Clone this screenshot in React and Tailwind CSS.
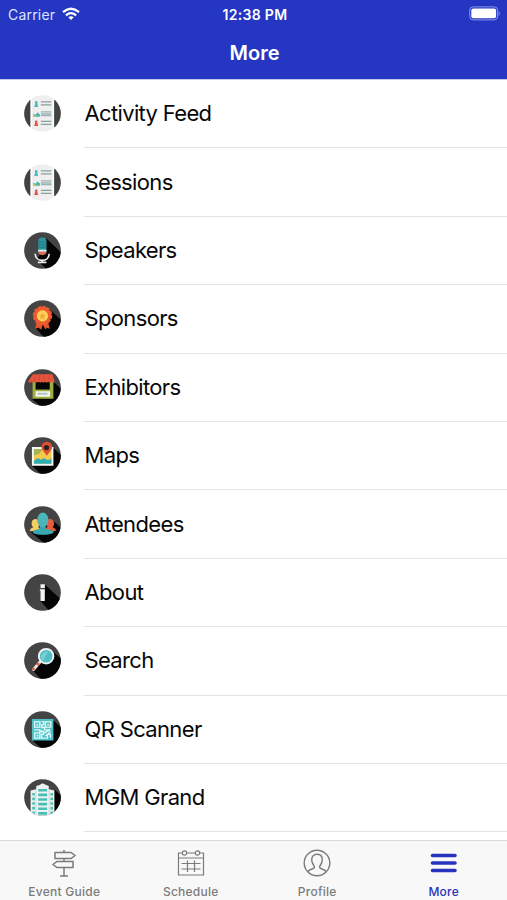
import React from "react";

function Disc({ id, shadow, children, light }) {
  return (
    <svg viewBox="0 0 112 112" className="-mt-px block size-[37px] shrink-0">
      <defs>
        <clipPath id={id}>
          <circle cx="56" cy="56" r="55.5" />
        </clipPath>
      </defs>
      <g clipPath={`url(#${id})`}>
        <rect width="112" height="112" fill={light ? "#efefef" : "#444444"} />
        {shadow && <path d={shadow} fill="#050505" />}
        {children}
      </g>
    </svg>
  );
}

function ListIcon({ id }) {
  return (
    <Disc id={id} light>
      <path d="M0 15H20V97H0ZM91 15H112V97H91Z" fill="#424242" />
      <path d="M20 11H24V101H20ZM87 11H91V101H87Z" fill="#fff" />
      <g fill="#4db9c2">
        <circle cx="37" cy="22" r="4" />
        <path d="M34 24h6l3 12H31z" />
      </g>
      <path d="M28 66V57l7 3 5-7 8 5v8z" fill="#48b6ac" />
      <path d="M28 66v-6l8 3v3z" fill="#e5c33e" />
      <g fill="#e2553f">
        <circle cx="37" cy="81" r="4" />
        <path d="M34 83h6l3 11H31z" />
      </g>
      <path d="M51 21h32M51 30h32M51 80h32M51 89h32" stroke="#86a19e" strokeWidth="4" />
      <path d="M51 51h32M51 57h32M51 62h32" stroke="#9db2b9" strokeWidth="4" />
    </Disc>
  );
}

function MicIcon() {
  return (
    <Disc id="mic" shadow="M68 20L112 62V112H68L38 83L50 66Z">
      <path d="M34 66c0 13 9 20 21 20s21-7 21-20M55 86v7M42 92h26" fill="none" stroke="#eee" strokeWidth="5" />
      <rect x="43" y="17" width="25" height="52" rx="12" fill="#2c929b" />
      <path d="M43 30h25M43 38h25M43 46h25" stroke="#247b84" strokeWidth="3" />
      <path d="M43 54h25v6H43z" fill="#e7eeee" />
      <path d="M43 60h25c-1 7-6 10-12.500 10S44 67 43 60z" fill="#e06b50" />
    </Disc>
  );
}

function RibbonIcon() {
  return (
    <Disc id="ribbon" shadow="M76 27L112 60V112H60L36 86Z">
      <path d="M39 62L34 86l10-2 8 6 5-16 8 15 4-5 9 3-6-25z" fill="#e4532c" />
      <circle cx="56" cy="47" r="27" fill="#ed5b2f" stroke="#ed5b2f" strokeWidth="5" strokeDasharray="10 4" />
      <circle cx="56" cy="48" r="17" fill="#ffd15b" />
      <path d="M56 38l3 7 8 1-6 5 2 8-7-4-7 4 2-8-6-5 8-1z" fill="#efac36" />
    </Disc>
  );
}

function ShopIcon() {
  return (
    <Disc id="shop" shadow="M88 38L112 60V112H50L25 92L56 55Z">
      <path d="M26 36h63v54H26z" fill="#9fae42" />
      <path d="M35 39h43v23H35z" fill="#070707" />
      <path d="M35 67h44v17H35z" fill="#f5f5ee" />
      <path d="M41 75h30" stroke="#abc3c8" strokeWidth="6" />
      <path d="M27 16h59l7 22q-4 7-9 0-5 7-10 0-5 7-10 0-5 7-10 0-5 7-10 0-5 7-10 0-5 7-10 0-5 7-12 0z" fill="#e5533b" />
      <path d="M35 20l-4 17M47 20l-2 17M61 20v17M74 20l4 17" stroke="#c94735" strokeWidth="2" />
    </Disc>
  );
}

function MapIcon() {
  return (
    <Disc id="map" shadow="M90 34L112 55V112H50L25 87Z">
      <path d="M24 30h65v57H24z" fill="#f7f7f4" />
      <path d="M30 36h53v45H30z" fill="#f7ca4b" />
      <path d="M30 36h27l-11 15-16 5z" fill="#a3b554" />
      <path d="M30 73q10-15 21-4 9-10 19 0 7 3 13-6v18H30z" fill="#32afb6" />
      <path d="M69 57L55 38a16 16 0 1 1 28 0z" fill="#e44c31" />
      <circle cx="68" cy="32" r="8" fill="#282321" />
    </Disc>
  );
}

function PeopleIcon() {
  return (
    <Disc id="people" shadow="M87 44L112 66V112H60L22 80Z">
      <ellipse cx="35" cy="53" rx="12" ry="14" fill="#f7ce61" />
      <path d="M17 75q3-10 18-13 13 0 16 14H20z" fill="#f7ce61" />
      <ellipse cx="79" cy="53" rx="12" ry="14" fill="#e85b3d" />
      <path d="M60 75q3-12 19-12 16 1 18 12l-14 3z" fill="#e85b3d" />
      <path d="M48 56h18v13l22 6-5 8q-26 6-52 0l-4-8 21-6z" fill="#36a7ac" />
      <ellipse cx="57" cy="42" rx="17" ry="22" fill="#4cb5b9" />
      <ellipse cx="58" cy="79" rx="32" ry="8" fill="#38a9ae" />
    </Disc>
  );
}

function InfoIcon() {
  return (
    <Disc id="info" shadow="M63 32L112 77V112H77L49 81L63 47Z">
      <path d="M50 31h13v11H50zM48 46h15v36H50V51h-2z" fill="#f3f3f3" />
    </Disc>
  );
}

function SearchIcon() {
  return (
    <Disc id="search" shadow="M83 25L112 50V112H50L28 87Z">
      <path d="M49 60L29 83" stroke="#e4e4e2" strokeWidth="9" strokeLinecap="round" />
      <path d="M45 64L40 70" stroke="#e4553c" strokeWidth="9" />
      <path d="M31 79l-4 5" stroke="#e4553c" strokeWidth="8" />
      <circle cx="67" cy="43" r="22" fill="#55bec5" stroke="#edf3f2" strokeWidth="6" />
      <path d="M52 48q0-17 21-20L57 58z" fill="#79d0d3" />
    </Disc>
  );
}

function QrIcon() {
  return (
    <Disc id="qr" shadow="M89 28L112 50V112H50L25 88Z">
      <path d="M24 24h65v65H24z" fill="#50c1c4" />
      <g fill="none" stroke="#e5faf8" strokeWidth="4">
        <path d="M32 33h16v16H32zM65 33h16v16H65zM32 66h16v16H32z" />
        <path d="M53 32h7v9h-6v9h8v7h18M31 57h17v5h11v9H53v11h10M65 82h6V71h9v11M60 67l17-9M65 76l15-13M53 58v7" />
      </g>
      <path d="M38 39h5v5h-5zM71 39h5v5h-5zM38 72h5v5h-5z" fill="#e5faf8" />
    </Disc>
  );
}

function HotelIcon() {
  return (
    <Disc id="hotel" shadow="M92 32L112 50V112H80Z">
      <path d="M20 112V35l17-4V21l10-3 9-5 11 5 8 3v10l17 4v77z" fill="#eef3f2" />
      <path d="M36 31v80M76 31v80" stroke="#ced8d7" strokeWidth="3" />
      <g stroke="#49beb6" strokeWidth="8">
        <path d="M43 34h27M43 48h27M43 62h27M43 76h27M43 90h27M43 104h27" />
        <path d="M25 46h8M25 60h8M25 74h8M25 88h8M25 102h8M80 46h8M80 60h8M80 74h8M80 88h8M80 102h8" />
      </g>
    </Disc>
  );
}

const rows = [
  ["Activity Feed", <ListIcon id="activity" />],
  ["Sessions", <ListIcon id="sessions" />],
  ["Speakers", <MicIcon />],
  ["Sponsors", <RibbonIcon />],
  ["Exhibitors", <ShopIcon />],
  ["Maps", <MapIcon />],
  ["Attendees", <PeopleIcon />],
  ["About", <InfoIcon />],
  ["Search", <SearchIcon />],
  ["QR Scanner", <QrIcon />],
  ["MGM Grand", <HotelIcon />],
];

function Tab({ label, active, children }) {
  return (
    <div className={`flex flex-1 flex-col items-center pt-[8px] ${active ? "text-[#2633bd]" : "text-[#7b7b7b]"}`}>
      <svg viewBox="0 0 28 28" className="block size-[28px]" fill="none" stroke="currentColor" strokeWidth="1.2">
        {children}
      </svg>
      <span className="mt-[7px] text-[12px] leading-[16px] font-medium tracking-[0.25px] whitespace-nowrap">{label}</span>
    </div>
  );
}

export default function App() {
  return (
    <div className="flex h-[900px] w-[507px] flex-col overflow-hidden bg-white font-['Inter','Liberation_Sans',sans-serif]">
      <header className="h-[79px] shrink-0 bg-[#2536c3] text-white">
        <div className="grid h-[28px] grid-cols-3 items-center pr-[7px] pl-[8px]">
          <div className="flex items-center gap-[7px] text-[14px] tracking-[0.2px] text-[#dfe3ff]">
            <span>Carrier</span>
            <svg viewBox="0 0 18 14" className="h-[14px] w-[18px]" fill="none" stroke="#fff" strokeWidth="2.300">
              <path d="M1 5.200Q9-1.600 17 5.200M3.900 8.300Q9 4 14.100 8.300" />
              <path d="M6.300 10.200Q9 8.200 11.700 10.200L9 13z" fill="#fff" stroke="none" />
            </svg>
          </div>
          <div className="pl-[2px] text-center text-[14px] font-semibold tracking-[0.3px] whitespace-nowrap">12:38 PM</div>
          <svg viewBox="0 0 32 15" className="-mt-px h-[15px] w-[32px] justify-self-end">
            <rect x="1.700" y="0.900" width="28" height="13" rx="3.500" fill="none" stroke="#8b96ea" />
            <rect x="3.300" y="2.500" width="24.800" height="9.800" rx="2" fill="#fff" />
            <path d="M30.700 5q2 2.500 0 5z" fill="#8b96ea" />
          </svg>
        </div>
        <h1 className="mt-[10px] pl-[2px] text-center text-[20px] leading-[30px] font-semibold">More</h1>
      </header>
      <main className="flex h-[761px] shrink-0 flex-col overflow-hidden border-t border-[#9aa3e6]/60">
        {rows.map(([label, icon]) => (
          <div key={label} className="flex h-[68.400px] shrink-0 items-center pl-[24px]">
            {icon}
            <div className="ml-[23px] flex h-full flex-1 items-center border-b border-[#e4e4e6] pl-[0.500px] text-[22px] tracking-[-0.65px] text-[#080808]">
              {label}
            </div>
          </div>
        ))}
      </main>
      <nav className="flex h-[60px] shrink-0 border-t border-[#d9d9d9] bg-[#f8f8f8] pl-[1px]">
        <Tab label="Event Guide">
          <path d="M5 3.500h16l4 3-4 3H5zM23 12.500H7l-4 3 4 3h16zM14 1v2.500M14 9.500v3M14 18.500V27M10 27h8" strokeWidth="1.500" />
        </Tab>
        <Tab label="Schedule">
          <path d="M5.500 4H1.500v22h25V4h-4M9.500 4h9M1.500 9h25" />
          <circle cx="7.500" cy="4" r="2.200" />
          <circle cx="20.500" cy="4" r="2.200" />
          <path d="M4.500 14.500h19M4.500 20h19M10.500 11.500V23M17.500 11.500V23" />
        </Tab>
        <Tab label="Profile">
          <circle cx="14" cy="14" r="12.800" strokeWidth="1.400" />
          <path d="M4.800 22.800q1-1.800 4.200-2.800c2.500-.8 3-1.800 1.800-3.500C8.800 14 8.700 12.500 8.700 10.800c0-3.300 2-5.600 5.300-5.600s5.300 2.300 5.300 5.600c0 1.700-.1 3.200-2.100 5.700-1.200 1.700-.7 2.700 1.800 3.500q3.200 1 4.200 2.800" strokeWidth="1.400" />
        </Tab>
        <Tab label="More" active>
          <path d="M2.500 6.500h22.500M2.500 14h22.500M2.500 21.500h22.500" strokeWidth="3.600" strokeLinecap="round" />
        </Tab>
      </nav>
    </div>
  );
}
